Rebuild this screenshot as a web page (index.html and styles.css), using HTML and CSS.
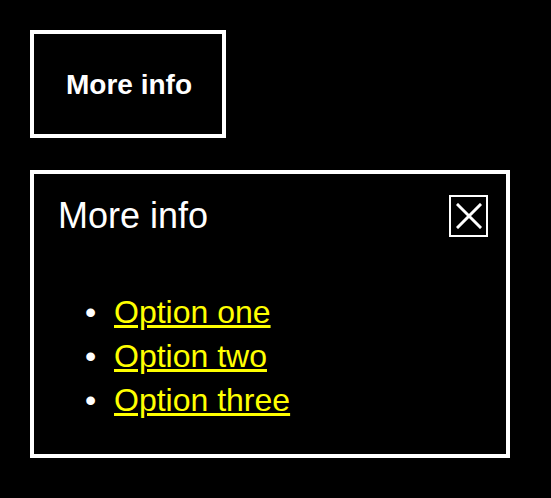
FILE: index.html
```html
<!DOCTYPE html>
<html lang="en">
<head>
<meta charset="utf-8">
<title>More info</title>
<link rel="stylesheet" href="styles.css">
</head>
<body>
<button class="trigger" type="button">More info</button>
<div class="dialog" role="dialog" aria-labelledby="dlg-title">
  <div class="dialog-header">
    <h2 class="dialog-title" id="dlg-title">More info</h2>
    <button class="close" type="button" aria-label="Close">
      <svg width="26" height="26" viewBox="0 0 26 26" aria-hidden="true">
        <path d="M2 2 L24 24 M24 2 L2 24" stroke="#fff" stroke-width="3" fill="none" stroke-linecap="square"/>
      </svg>
    </button>
  </div>
  <ul class="options">
    <li><a href="#">Option one</a></li>
    <li><a href="#">Option two</a></li>
    <li><a href="#">Option three</a></li>
  </ul>
</div>
</body>
</html>
```
FILE: styles.css
```css
html, body {
  background: #000;
}
body {
  margin: 0;
  padding: 30px;
  font-family: "Liberation Sans", Arial, sans-serif;
  color: #fff;
}
.trigger {
  display: block;
  box-sizing: border-box;
  width: 196px;
  height: 108px;
  margin: 0;
  padding: 1px 0 0 2px;
  border: 4px solid #fff;
  background: #000;
  color: #fff;
  font-family: "Liberation Sans", Arial, sans-serif;
  font-weight: 700;
  font-size: 28px;
  line-height: 32px;
  text-align: center;
}
.dialog {
  box-sizing: border-box;
  width: 480px;
  margin-top: 32px;
  border: 4px solid #fff;
  padding: 21px 18px 21px 24px;
}
.dialog-header {
  display: flex;
  justify-content: space-between;
  align-items: stretch;
}
.dialog-title {
  margin: 0;
  font-weight: 400;
  font-size: 36px;
  line-height: 41px;
}
.close {
  box-sizing: border-box;
  width: 39px;
  height: 42px;
  margin: 0;
  padding: 0;
  border: 2px solid #fff;
  background: #000;
  display: flex;
  align-items: center;
  justify-content: center;
}
.close svg {
  display: block;
}
.options {
  margin: 53px 0 11px;
  padding-left: 56px;
  font-size: 32px;
  line-height: 44px;
}
.options li::marker {
  content: "\2022\00a0\00a0";
}
.options a {
  color: #ff0;
  text-decoration: underline;
}
```
